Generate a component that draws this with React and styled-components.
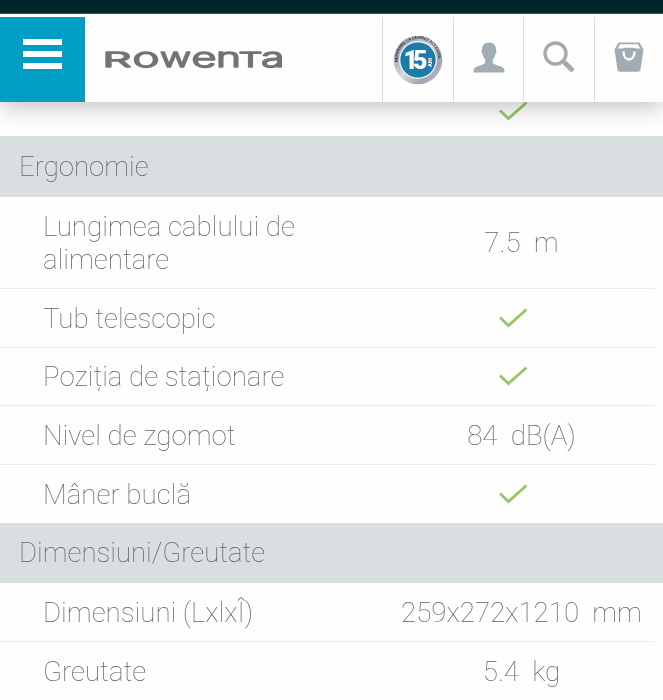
import React from "react";
import styled, { createGlobalStyle } from "styled-components";

const GlobalStyle = createGlobalStyle`
  * {
    box-sizing: border-box;
  }
  body {
    margin: 0;
    background: #fefefe;
    font-family: Roboto, "Liberation Sans", sans-serif;
    overflow: hidden;
  }
`;

const Page = styled.div`
  width: 663px;
  height: 700px;
  overflow: hidden;
  background: #fefefe;
`;
const StatusStrip = styled.div`
  height: 14px;
  background: #00262c;
  border-bottom: 1px solid #33545a;
`;
const Header = styled.header`
  position: relative;
  z-index: 1;
  display: flex;
  height: 88px;
  padding-top: 3px;
  background: #fefefe;
  box-shadow: 0 5px 22px rgba(0, 0, 0, 0.24);
  clip-path: inset(0 0 -34px 0);
`;
const MenuButton = styled.button`
  display: flex;
  flex-direction: column;
  align-items: center;
  gap: 6px;
  width: 85px;
  padding: 22px 0 0;
  border: 0;
  background: #009dc5;
`;
const Bar = styled.span`
  width: 39px;
  height: 6px;
  background: #fff;
`;
const Brand = styled.div`
  flex: 1;
  padding: 19px 0 0 15px;
`;
const HeaderItem = styled.div`
  display: flex;
  align-items: center;
  justify-content: center;
  width: ${(p) => p.$width || 70}px;
  padding-bottom: ${(p) => p.$lift || 0}px;
  border-left: 1px solid #dcdcdc;
`;
const Specs = styled.main`
  font-size: 27.7px;
  font-weight: 100;
  line-height: 33px;
  color: #626466;
  will-change: opacity;
`;
const Section = styled.h2`
  display: flex;
  align-items: center;
  height: ${(p) => p.$height}px;
  margin: 0;
  padding: 0 0 1px 19px;
  background: #d9dee1;
  font-size: 27.6px;
  font-weight: 100;
`;
const Row = styled.div`
  display: grid;
  grid-template-columns: 364px 291px;
  align-items: center;
  width: 655px;
  height: ${(p) => p.$height}px;
  border-bottom: ${(p) => (p.$last ? "0" : "1px solid #ececee")};
`;
const Label = styled.div`
  padding: 0 60px 0 43px;
`;
const Value = styled.div`
  display: flex;
  justify-content: center;
  padding-left: ${(p) => (p.$check ? 6 : 24)}px;
  padding-bottom: ${(p) => (p.$check ? 1 : 0)}px;
  white-space: pre;
`;
const ClippedRow = styled(Row)`
  align-items: start;

  svg {
    margin-top: -2px;
  }
`;

// capitals and small letters share one height, so each gets its own size
const wordmark = [
  { char: "R", x: 2.5, size: 20.5, width: 29 },
  { char: "o", x: 32.5, size: 26, width: 27 },
  { char: "w", x: 60, size: 26, width: 31 },
  { char: "e", x: 91.5, size: 26, width: 25 },
  { char: "n", x: 116, size: 26, width: 25 },
  { char: "T", x: 138.5, size: 20.5, width: 24 },
  { char: "a", x: 161, size: 26, width: 23.5 },
];

function Logo() {
  return (
    <svg
      width="190"
      height="44"
      viewBox="0 0 190 44"
      fill="#757371"
      stroke="#757371"
      strokeWidth="1.4"
      strokeLinejoin="round"
    >
      {wordmark.map((l) => (
        <text
          key={l.char}
          x={l.x}
          y="31.300"
          fontFamily="Inter, sans-serif"
          fontWeight="300"
          fontSize={l.size}
          textLength={l.width}
          lengthAdjust="spacingAndGlyphs"
        >
          {l.char}
        </text>
      ))}
    </svg>
  );
}

function Badge() {
  return (
    <svg width="50" height="50" viewBox="0 0 50 50">
      <defs>
        <linearGradient id="rim" x1="0" y1="0" x2="1" y2="1">
          <stop offset="0" stopColor="#9da3aa" />
          <stop offset="0.3" stopColor="#b4b9bf" />
          <stop offset="0.5" stopColor="#d5d8dc" />
          <stop offset="0.75" stopColor="#a2a3ac" />
          <stop offset="1" stopColor="#c9cbd0" />
        </linearGradient>
        <path id="arc" d="M5 27A20.200 20.200 0 1 1 45 27" />
      </defs>
      <circle cx="25" cy="25" r="24.3" fill="url(#rim)" />
      <circle cx="25" cy="25" r="19" fill="#e4edf2" />
      <circle cx="25" cy="25" r="17.6" fill="#1c7ba6" />
      <text fontFamily="Liberation Sans, sans-serif" fontSize="4.2" fontWeight="700" fill="#30343a">
        <textPath href="#arc" textLength="66">REPARABIL LA UN PREȚ ACCESIBIL</textPath>
      </text>
      <text x="10.5" y="34" fontFamily="Roboto, sans-serif" fontSize="25" fontWeight="900" fill="#fff" textLength="24">
        15
      </text>
      <text transform="translate(39 32) rotate(-90)" fontFamily="Roboto, sans-serif" fontSize="5.5" fontWeight="700" fill="#fff">
        ANI
      </text>
    </svg>
  );
}

function UserIcon() {
  return (
    <svg width="32" height="31" viewBox="0 0 32 31" fill="#a1adb5">
      <path d="M16 .5c5 0 7 3.200 7 7.500 1 1 .5 3-.6 4-.5 3-1.600 4.300-2.600 5.500v3c1 3 9 3 11 6 .7 1.200.7 2.500.7 4H.5c0-1.500 0-2.800.7-4 2-3 10-3 11-6v-3c-1-1.200-2.100-2.500-2.600-5.500-1.100-1-1.600-3-.6-4 0-4.300 2-7.500 7-7.500z" />
    </svg>
  );
}

function SearchIcon() {
  return (
    <svg width="32" height="32" viewBox="0 0 32 32" fill="none" stroke="#a4abaf">
      <circle cx="12.500" cy="12.500" r="10.500" strokeWidth="3.400" />
      <path d="M20 20l3 3" strokeWidth="3.500" />
      <path d="M22.500 22.500l6 5.800" strokeWidth="5" strokeLinecap="round" />
    </svg>
  );
}

function BagIcon() {
  return (
    <svg width="32" height="30" viewBox="0 0 32 30">
      <path d="M5.500 .5h21l4 7-3 20c-.3 1.500-1 2.200-2.500 2.200H7c-1.500 0-2.200-.7-2.500-2.200l-3-20z" fill="#a0abb4" />
      <path d="M7.300 2.300h17.400l2.800 4.200h-5l-2-.8h-9l-2 .8h-5z" fill="#fefefe" />
      <path d="M10.500 9.500c0 5 2.500 8 5.500 8s5.500-3 5.500-8" fill="none" stroke="#fefefe" strokeWidth="2.400" />
    </svg>
  );
}

function Check() {
  return (
    <svg width="32" height="22" viewBox="0 0 32 22" fill="none">
      <path d="M3 10.500l8.500 8L29.500 2.500" stroke="#95c766" strokeWidth="2.800" />
    </svg>
  );
}

const ergonomics = [
  { label: "Lungimea cablului de alimentare", value: "7.5  m", height: 92 },
  { label: "Tub telescopic", height: 59 },
  { label: "Poziția de staționare", height: 58 },
  { label: "Nivel de zgomot", value: "84  dB(A)", height: 59 },
  { label: "Mâner buclă", height: 58, last: true },
];

const dimensions = [
  { label: "Dimensiuni (LxlxÎ)", value: "259x272x1210  mm", height: 59 },
  { label: "Greutate", value: "5.4  kg", height: 58, last: true },
];

function SpecRow({ label, value, height, last }) {
  return (
    <Row $height={height} $last={last}>
      <Label>{label}</Label>
      <Value $check={!value}>{value || <Check />}</Value>
    </Row>
  );
}

function App() {
  return (
    <Page>
      <GlobalStyle />
      <StatusStrip />
      <Header>
        <MenuButton>
          <Bar />
          <Bar />
          <Bar />
        </MenuButton>
        <Brand>
          <Logo />
        </Brand>
        <HeaderItem $width={71}>
          <Badge />
        </HeaderItem>
        <HeaderItem $lift={5}>
          <UserIcon />
        </HeaderItem>
        <HeaderItem $width={71} $lift={5}>
          <SearchIcon />
        </HeaderItem>
        <HeaderItem $width={69} $lift={6}>
          <BagIcon />
        </HeaderItem>
      </Header>
      <Specs>
        <ClippedRow $height={34} $last>
          <Label />
          <Value $check>
            <Check />
          </Value>
        </ClippedRow>
        <Section $height={61}>Ergonomie</Section>
        {ergonomics.map((r) => (
          <SpecRow key={r.label} {...r} />
        ))}
        <Section $height={60}>Dimensiuni/Greutate</Section>
        {dimensions.map((r) => (
          <SpecRow key={r.label} {...r} />
        ))}
      </Specs>
    </Page>
  );
}

export default App;
